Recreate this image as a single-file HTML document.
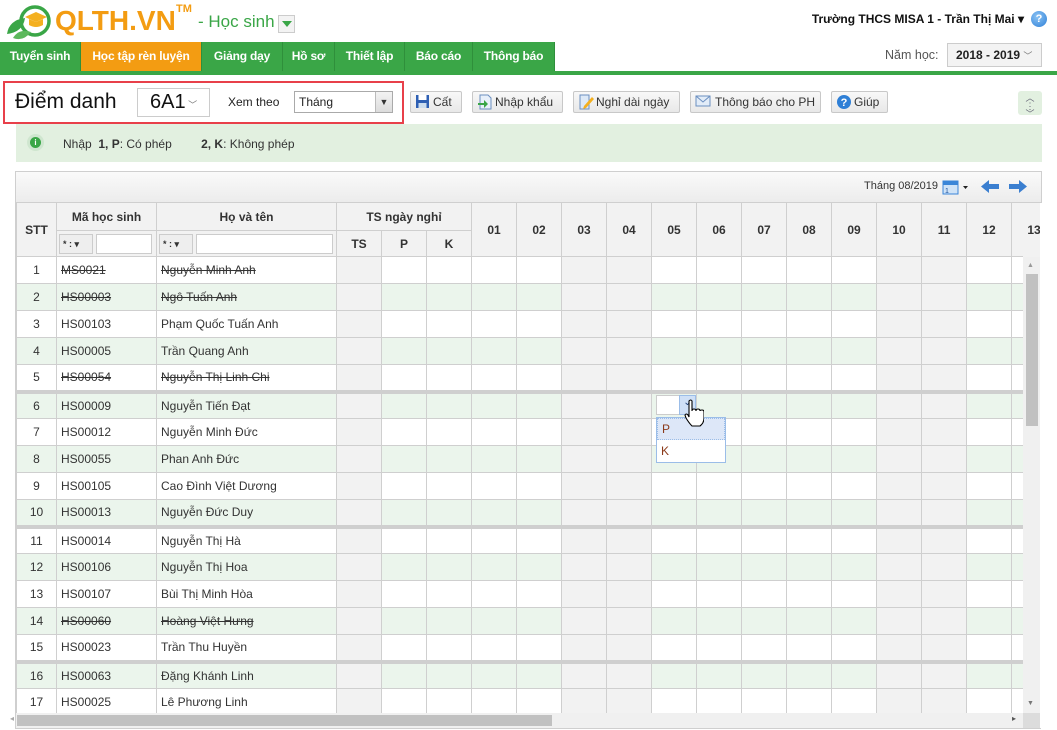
<!DOCTYPE html>
<html><head><meta charset="utf-8"><style>
*{box-sizing:border-box;margin:0;padding:0}
body{width:1057px;height:730px;overflow:hidden;background:#fff;font-family:"Liberation Sans",Arial,sans-serif;font-size:12px;color:#222;position:relative}
.a{position:absolute}
.menu{left:0;top:42px;width:555px;height:29px;background:#3aa647;display:flex}
.menu div{color:#fff;font-weight:bold;font-size:12px;line-height:29px;text-align:center;white-space:nowrap;border-right:1px solid #2f8f3b;letter-spacing:-0.2px}
.menu .on{background:#f39c12}
.btn{top:91px;height:22px;border:1px solid #c8c8c8;border-radius:2px;background:linear-gradient(#f8f8f8,#e8e8e8);font-size:12px;line-height:20px;padding-left:22px;color:#333;white-space:nowrap}
.btn svg{position:absolute;left:4px;top:2px}
table{border-collapse:collapse;table-layout:fixed;width:1035px}
td,th{border:1px solid #cfcfcf;height:27px;overflow:hidden;white-space:nowrap}
th{background:#f2f2f2;font-weight:bold;font-size:12px;color:#333}
td{font-size:12px;color:#333}
td:first-child{text-align:center}
td:nth-child(2),td:nth-child(3){padding-left:4px}
tr.g td{background:#ebf5ec}
td.x,tr.g td.x{background:#f2f2f2}
tr.sep td{border-bottom:4px solid #cfcfcf}
.s{text-decoration:line-through}
.flt{display:inline-block;height:20px;border:1px solid #ccc;background:#fff;vertical-align:middle}
</style></head><body>
<svg class="a" style="left:3px;top:4px" width="52" height="36" viewBox="0 0 52 36">
<circle cx="32" cy="17" r="14" fill="none" stroke="#3aa647" stroke-width="3.5"/>
<path d="M22 13 L33 8 L44 13 L33 18 Z" fill="#f4b020"/><path d="M26 15 v6 q7 4 14 0 v-6 l-7 3z" fill="#f4b020"/>
<path d="M4 30 q2-14 18-16 q-2 14-18 16z" fill="#3aa647"/><path d="M10 34 q6-10 18-6 q-8 10-18 6z" fill="#5cb85c"/>
</svg>
<div class="a" style="left:55px;top:5px;font-size:28px;font-weight:bold;color:#f39c12">QLTH.VN</div>
<div class="a" style="left:176px;top:3px;font-size:11px;font-weight:bold;color:#f39c12">TM</div>
<div class="a" style="left:198px;top:12px;font-size:17px;color:#3aa647;white-space:nowrap">- Học sinh</div>
<div class="a" style="left:278px;top:15px;width:17px;height:18px;border:1px solid #ccc;background:#f3f3f3"><div class="a" style="left:3px;top:5px;border-left:5px solid transparent;border-right:5px solid transparent;border-top:6px solid #3aa647"></div></div>
<div class="a" style="left:790px;top:12px;width:234px;text-align:right;font-size:12px;font-weight:bold;color:#111;white-space:nowrap">Trường THCS MISA 1 - Trần Thị Mai ▾</div>
<div class="a" style="left:1031px;top:11px;width:16px;height:16px;border-radius:50%;background:radial-gradient(circle at 40% 35%,#8cc4f5,#2e7fd6);color:#fff;font-size:11px;font-weight:bold;text-align:center;line-height:16px">?</div>
<div class="a menu"><div style="width:81px">Tuyển sinh</div><div class="on" style="width:121px">Học tập rèn luyện</div><div style="width:81px">Giảng dạy</div><div style="width:52px">Hồ sơ</div><div style="width:70px">Thiết lập</div><div style="width:68px">Báo cáo</div><div style="width:82px">Thông báo</div></div>
<div class="a" style="left:0;top:71px;width:1057px;height:4px;background:#3aa647"></div>
<div class="a" style="left:885px;top:48px;font-size:12.5px;color:#555">Năm học:</div>
<div class="a" style="left:947px;top:43px;width:95px;height:24px;border:1px solid #ccc;background:#f3f3f3;font-weight:bold;font-size:12px;line-height:22px;padding-left:8px;white-space:nowrap">2018 - 2019 <span style="font-weight:normal;color:#777;font-size:9px">﹀</span></div>
<div class="a" style="left:3px;top:81px;width:401px;height:43px;border:2px solid #e8404a"></div>
<div class="a" style="left:15px;top:90px;font-size:21px;color:#111">Điểm danh</div>
<div class="a" style="left:137px;top:88px;width:73px;height:29px;border:1px solid #ccc;font-size:20px;line-height:27px;padding-left:12px;color:#111;white-space:nowrap">6A1<span style="font-size:9px;color:#777"> ﹀</span></div>
<div class="a" style="left:228px;top:95px;font-size:12px">Xem theo</div>
<div class="a" style="left:294px;top:91px;width:99px;height:22px;border:1px solid #aaa;font-size:12px;line-height:20px;padding-left:4px">Tháng<div class="a" style="right:0;top:0;width:17px;height:20px;background:linear-gradient(#f3f3f3,#dcdcdc);border-left:1px solid #bbb;text-align:center;font-size:9px;color:#333;line-height:20px">▼</div></div>
<div class="a btn" style="left:410px;width:52px"><svg width="15" height="15"><rect x="1" y="1" width="13" height="13" fill="#2e5fb3"/><rect x="3.5" y="1" width="8" height="5" fill="#fff"/><rect x="3.5" y="9" width="8" height="5" fill="#cde"/></svg>Cất</div>
<div class="a btn" style="left:472px;width:91px"><svg width="16" height="16"><path d="M3 1h8l3 3v11H3z" fill="#e8f0fa" stroke="#6b8fc0"/><path d="M1 9h6V6l4 4-4 4v-3H1z" fill="#3aa647"/></svg>Nhập khẩu</div>
<div class="a btn" style="left:573px;width:107px"><svg width="16" height="16"><path d="M2 1h9v14H2z" fill="#dde9f7" stroke="#6b8fc0"/><path d="M6 12l8-9 2 2-8 9-3 1z" fill="#f4b020"/></svg>Nghỉ dài ngày</div>
<div class="a btn" style="left:690px;width:131px;padding-left:24px"><svg width="16" height="14"><rect x="1" y="2" width="14" height="10" fill="#e2ecf8" stroke="#6b8fc0"/><path d="M1 2l7 6 7-6" fill="none" stroke="#6b8fc0"/></svg>Thông báo cho PH</div>
<div class="a btn" style="left:831px;width:57px"><svg width="16" height="16"><circle cx="8" cy="8" r="7" fill="#2e7fd6"/><text x="8" y="12" font-size="11" font-weight="bold" fill="#fff" text-anchor="middle" font-family="Liberation Sans">?</text></svg>Giúp</div>
<div class="a" style="left:1018px;top:91px;width:24px;height:24px;background:#e2f0e0;border-radius:3px;color:#667;text-align:center;font-size:9px;line-height:8px;padding-top:3px">︿<br>⋮<br>﹀</div>
<div class="a" style="left:16px;top:124px;width:1026px;height:38px;background:#e2f0e0"></div>
<div class="a" style="left:27px;top:134px;width:17px;height:17px;border-radius:50%;background:#cfe6cf"></div>
<div class="a" style="left:30px;top:137px;width:11px;height:11px;border-radius:50%;background:#3aa647;color:#fff;font-size:8px;text-align:center;line-height:11px;font-weight:bold">i</div>
<div class="a" style="left:63px;top:137px;font-size:12px;color:#333;white-space:nowrap">Nhập&nbsp; <b>1, P</b>: Có phép <span style="display:inline-block;width:26px"></span><b>2, K</b>: Không phép</div>
<div class="a" style="left:15px;top:171px;width:1027px;height:32px;border:1px solid #cfcfcf;background:linear-gradient(#fafafa,#ececec)"></div>
<div class="a" style="left:864px;top:180px;font-size:11px;color:#333;white-space:nowrap">Tháng 08/2019</div>
<svg class="a" style="left:942px;top:178px" width="28" height="18"><rect x="1" y="3" width="15" height="13" fill="#cfe3f7" stroke="#3b86d8"/><rect x="1" y="3" width="15" height="4" fill="#3b86d8"/><text x="3" y="15" font-size="7" fill="#1a4e9a" font-family="Liberation Sans">1</text><path d="M21 8h5l-2.5 3z" fill="#222"/></svg>
<svg class="a" style="left:980px;top:179px" width="20" height="15"><path d="M1 7.5L9 1v4h10v5H9v4z" fill="#3b7fd0"/></svg>
<svg class="a" style="left:1008px;top:179px" width="20" height="15"><path d="M19 7.5L11 1v4H1v5h10v4z" fill="#3b7fd0"/></svg>
<div class="a" style="left:16px;top:202px;width:1024px;height:55px;overflow:hidden">
<table><colgroup><col style="width:40px"><col style="width:100px"><col style="width:180px"><col style="width:45px"><col style="width:45px"><col style="width:45px"><col span="13" style="width:45px"></colgroup>
<tr><th rowspan="2">STT</th><th style="height:28px">Mã học sinh</th><th>Họ và tên</th><th colspan="3">TS ngày nghỉ</th><th rowspan="2">01</th><th rowspan="2">02</th><th rowspan="2">03</th><th rowspan="2">04</th><th rowspan="2">05</th><th rowspan="2">06</th><th rowspan="2">07</th><th rowspan="2">08</th><th rowspan="2">09</th><th rowspan="2">10</th><th rowspan="2">11</th><th rowspan="2">12</th><th rowspan="2">13</th></tr>
<tr><th style="text-align:left;padding-left:2px"><span class="flt" style="width:34px;background:#eee;font-size:9px;line-height:18px;padding-left:3px">* : ▾</span> <span class="flt" style="width:56px"></span></th><th style="text-align:left;padding-left:2px"><span class="flt" style="width:34px;background:#eee;font-size:9px;line-height:18px;padding-left:3px">* : ▾</span> <span class="flt" style="width:137px"></span></th><th>TS</th><th>P</th><th>K</th></tr>
</table></div>
<div class="a" style="left:16px;top:256px;width:1007px;height:457px;overflow:hidden">
<table><colgroup><col style="width:40px"><col style="width:100px"><col style="width:180px"><col style="width:45px"><col style="width:45px"><col style="width:45px"><col span="13" style="width:45px"></colgroup>
<tr><td>1</td><td class="s">MS0021</td><td class="s">Nguyễn Minh Anh</td><td class="x"></td><td></td><td></td><td></td><td></td><td class="x"></td><td class="x"></td><td></td><td></td><td></td><td></td><td></td><td class="x"></td><td class="x"></td><td></td><td></td></tr>
<tr class="g"><td>2</td><td class="s">HS00003</td><td class="s">Ngô Tuấn Anh</td><td class="x"></td><td></td><td></td><td></td><td></td><td class="x"></td><td class="x"></td><td></td><td></td><td></td><td></td><td></td><td class="x"></td><td class="x"></td><td></td><td></td></tr>
<tr><td>3</td><td>HS00103</td><td>Phạm Quốc Tuấn Anh</td><td class="x"></td><td></td><td></td><td></td><td></td><td class="x"></td><td class="x"></td><td></td><td></td><td></td><td></td><td></td><td class="x"></td><td class="x"></td><td></td><td></td></tr>
<tr class="g"><td>4</td><td>HS00005</td><td>Trần Quang Anh</td><td class="x"></td><td></td><td></td><td></td><td></td><td class="x"></td><td class="x"></td><td></td><td></td><td></td><td></td><td></td><td class="x"></td><td class="x"></td><td></td><td></td></tr>
<tr class="sep"><td>5</td><td class="s">HS00054</td><td class="s">Nguyễn Thị Linh Chi</td><td class="x"></td><td></td><td></td><td></td><td></td><td class="x"></td><td class="x"></td><td></td><td></td><td></td><td></td><td></td><td class="x"></td><td class="x"></td><td></td><td></td></tr>
<tr class="g"><td>6</td><td>HS00009</td><td>Nguyễn Tiến Đạt</td><td class="x"></td><td></td><td></td><td></td><td></td><td class="x"></td><td class="x"></td><td></td><td></td><td></td><td></td><td></td><td class="x"></td><td class="x"></td><td></td><td></td></tr>
<tr><td>7</td><td>HS00012</td><td>Nguyễn Minh Đức</td><td class="x"></td><td></td><td></td><td></td><td></td><td class="x"></td><td class="x"></td><td></td><td></td><td></td><td></td><td></td><td class="x"></td><td class="x"></td><td></td><td></td></tr>
<tr class="g"><td>8</td><td>HS00055</td><td>Phan Anh Đức</td><td class="x"></td><td></td><td></td><td></td><td></td><td class="x"></td><td class="x"></td><td></td><td></td><td></td><td></td><td></td><td class="x"></td><td class="x"></td><td></td><td></td></tr>
<tr><td>9</td><td>HS00105</td><td>Cao Đình Việt Dương</td><td class="x"></td><td></td><td></td><td></td><td></td><td class="x"></td><td class="x"></td><td></td><td></td><td></td><td></td><td></td><td class="x"></td><td class="x"></td><td></td><td></td></tr>
<tr class="g sep"><td>10</td><td>HS00013</td><td>Nguyễn Đức Duy</td><td class="x"></td><td></td><td></td><td></td><td></td><td class="x"></td><td class="x"></td><td></td><td></td><td></td><td></td><td></td><td class="x"></td><td class="x"></td><td></td><td></td></tr>
<tr><td>11</td><td>HS00014</td><td>Nguyễn Thị Hà</td><td class="x"></td><td></td><td></td><td></td><td></td><td class="x"></td><td class="x"></td><td></td><td></td><td></td><td></td><td></td><td class="x"></td><td class="x"></td><td></td><td></td></tr>
<tr class="g"><td>12</td><td>HS00106</td><td>Nguyễn Thị Hoa</td><td class="x"></td><td></td><td></td><td></td><td></td><td class="x"></td><td class="x"></td><td></td><td></td><td></td><td></td><td></td><td class="x"></td><td class="x"></td><td></td><td></td></tr>
<tr><td>13</td><td>HS00107</td><td>Bùi Thị Minh Hòa</td><td class="x"></td><td></td><td></td><td></td><td></td><td class="x"></td><td class="x"></td><td></td><td></td><td></td><td></td><td></td><td class="x"></td><td class="x"></td><td></td><td></td></tr>
<tr class="g"><td>14</td><td class="s">HS00060</td><td class="s">Hoàng Việt Hưng</td><td class="x"></td><td></td><td></td><td></td><td></td><td class="x"></td><td class="x"></td><td></td><td></td><td></td><td></td><td></td><td class="x"></td><td class="x"></td><td></td><td></td></tr>
<tr class="sep"><td>15</td><td>HS00023</td><td>Trần Thu Huyền</td><td class="x"></td><td></td><td></td><td></td><td></td><td class="x"></td><td class="x"></td><td></td><td></td><td></td><td></td><td></td><td class="x"></td><td class="x"></td><td></td><td></td></tr>
<tr class="g"><td>16</td><td>HS00063</td><td>Đặng Khánh Linh</td><td class="x"></td><td></td><td></td><td></td><td></td><td class="x"></td><td class="x"></td><td></td><td></td><td></td><td></td><td></td><td class="x"></td><td class="x"></td><td></td><td></td></tr>
<tr><td>17</td><td>HS00025</td><td>Lê Phương Linh</td><td class="x"></td><td></td><td></td><td></td><td></td><td class="x"></td><td class="x"></td><td></td><td></td><td></td><td></td><td></td><td class="x"></td><td class="x"></td><td></td><td></td></tr>
</table></div>
<div class="a" style="left:656px;top:395px;width:24px;height:20px;background:#fff;border:1px solid #ccc"></div>
<div class="a" style="left:679px;top:395px;width:17px;height:20px;background:#cfe0f7;border:1px solid #9bbde8;text-align:center;font-size:10px;color:#1d3f78;line-height:14px">⌄</div>
<div class="a" style="left:656px;top:417px;width:70px;height:46px;background:#fff;border:1px solid #9bbde8">
<div style="height:22px;background:#dde7f8;border:1px dotted #9bbde8;padding-left:4px;line-height:20px;color:#8b3a1a">P</div>
<div style="padding-left:4px;line-height:22px;color:#8b3a1a">K</div></div>
<svg class="a" style="left:684px;top:399px" width="20" height="28" viewBox="0 0 20 28"><path d="M5 2q2-2 3 0v10q0-2 2-2t2 2q0-2 2-2t2 2q0-1 2-1t2 2v6q0 5-4 8H8q-3-3-6-8l-1-3q1-2 3 0l1 2z" fill="#fff" stroke="#000" stroke-width="1.1"/></svg>
<div class="a" style="left:1023px;top:257px;width:17px;height:456px;background:#f0f0f0"></div>
<div class="a" style="left:1027px;top:262px;font-size:7px;color:#999">▲</div>
<div class="a" style="left:1026px;top:274px;width:12px;height:152px;background:#c1c1c1"></div>
<div class="a" style="left:1027px;top:700px;font-size:7px;color:#777">▼</div>
<div class="a" style="left:16px;top:713px;width:1007px;height:15px;background:#f0f0f0"></div>
<div class="a" style="left:1023px;top:713px;width:17px;height:15px;background:#dcdcdc"></div>
<div class="a" style="left:17px;top:715px;width:535px;height:11px;background:#c1c1c1"></div>
<div class="a" style="left:10px;top:714px;font-size:8px;color:#aaa">◂</div>
<div class="a" style="left:1012px;top:714px;font-size:8px;color:#555">▸</div>
<div class="a" style="left:15px;top:171px;width:1px;height:558px;background:#cfcfcf"></div>
<div class="a" style="left:15px;top:728px;width:1026px;height:1px;background:#cfcfcf"></div>
</body></html>
